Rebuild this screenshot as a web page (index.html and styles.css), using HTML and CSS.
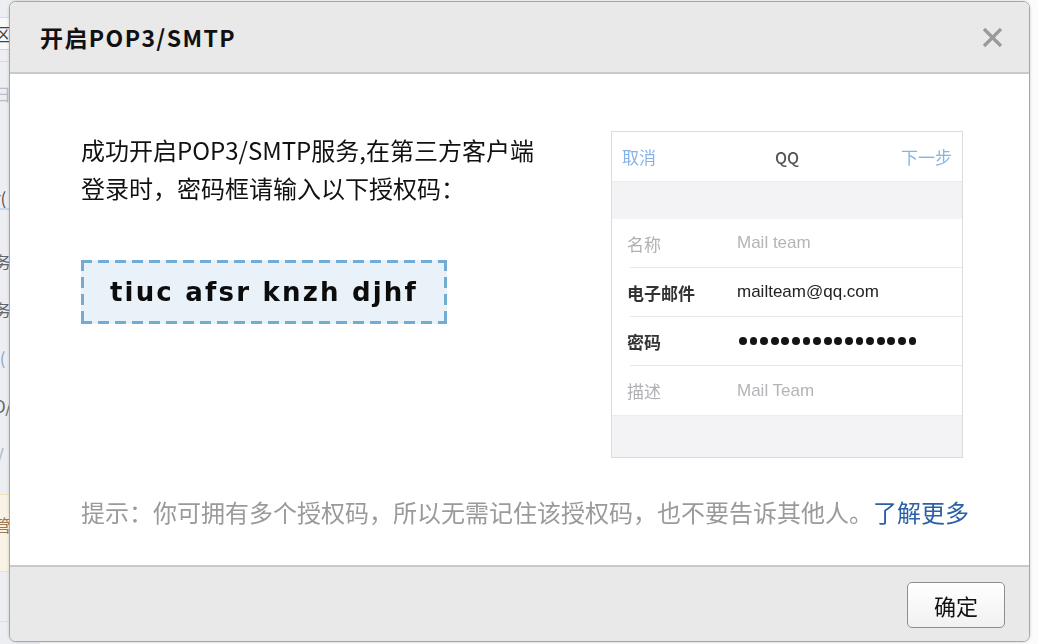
FILE: index.html
```html
<!DOCTYPE html>
<html lang="zh-CN">
<head>
<meta charset="utf-8">
<title>开启POP3/SMTP</title>
<link rel="stylesheet" href="styles.css">
</head>
<body>
<div class="page">
  <div class="bg-col">
    <div class="bg-row top"></div>
    <div class="bg-row input"><span class="frag">区</span></div>
    <div class="bg-row thin"></div>
    <div class="bg-row tall"><span class="frag faint">日</span></div>
    <div class="bg-row tall2"><span class="frag dark">r(</span></div>
    <div class="bg-row sep"></div>
    <div class="bg-row item"><span class="frag">务</span></div>
    <div class="bg-row item"><span class="frag">务</span></div>
    <div class="bg-row item"><span class="frag">(<b class="blue">(</b></span></div>
    <div class="bg-row item"><span class="frag">D/</span></div>
    <div class="bg-row item"><span class="frag faint">V</span></div>
    <div class="bg-row notice"><span class="frag brown">管</span></div>
    <div class="bg-row item2"></div>
  </div>
</div>

<div class="dialog">
  <div class="dlg-head">
    <h1 class="dlg-title">开启POP3/SMTP</h1>
    <button class="dlg-close" aria-label="关闭">
      <svg width="21" height="21" viewBox="0 0 21 21"><path d="M2 2 L19 19 M19 2 L2 19" stroke="#9a9a9a" stroke-width="3.2" fill="none"/></svg>
    </button>
  </div>
  <div class="dlg-body">
    <div class="main">
      <div class="left">
        <p class="desc">成功开启POP3/SMTP服务,在第三方客户端<br>登录时，密码框请输入以下授权码：</p>
        <div class="code">tiuc afsr knzh djhf</div>
      </div>
      <div class="phone">
        <div class="ph-head">
          <span class="ph-cancel">取消</span>
          <span class="ph-title">QQ</span>
          <span class="ph-next">下一步</span>
        </div>
        <div class="ph-gap"></div>
        <div class="ph-list">
          <div class="ph-row light"><span class="ph-label">名称</span><span class="ph-val">Mail team</span></div>
          <div class="ph-row dark"><span class="ph-label">电子邮件</span><span class="ph-val">mailteam@qq.com</span></div>
          <div class="ph-row dark"><span class="ph-label">密码</span><span class="ph-val dots" aria-label="密码已隐藏"><i></i><i></i><i></i><i></i><i></i><i></i><i></i><i></i><i></i><i></i><i></i><i></i><i></i><i></i><i></i><i></i><i></i></span></div>
          <div class="ph-row light last"><span class="ph-label">描述</span><span class="ph-val">Mail Team</span></div>
        </div>
        <div class="ph-foot"></div>
      </div>
    </div>
    <p class="hint">提示：你可拥有多个授权码，所以无需记住该授权码，也不要告诉其他人。<a class="more" href="#">了解更多</a></p>
  </div>
  <div class="dlg-foot">
    <button class="btn-ok">确定</button>
  </div>
</div>
</body>
</html>
```

FILE: styles.css
```css
* { box-sizing: border-box; }
html, body { margin: 0; padding: 0; }
body {
  width: 1038px;
  height: 644px;
  overflow: hidden;
  background: #fbfbfc;
  font-family: "Noto Sans CJK SC", "Noto Sans", sans-serif;
  color: #111;
}

/* background page fragments */
.page { width: 1038px; height: 644px; }
.bg-col {
  width: 40px;
  height: 644px;
  background: #eceef2;
  display: flex;
  flex-direction: column;
  font-size: 17px;
  color: #666;
}
.bg-row { position: relative; overflow: hidden; white-space: nowrap; }
.frag { display: block; margin-left: -6px; line-height: 20px; }
.frag .blue { color: #8aa8d0; font-weight: normal; }
.faint { color: #b8bcc6; }
.dark { color: #555; }
.brown { color: #a07850; }
.bg-row.top { height: 18px; border-bottom: 1px solid #d8dadf; }
.bg-row.input { height: 32px; background: #f8f8f9; padding-top: 6px; border-bottom: 1px solid #d0d2d7; }
.bg-row.input .frag { color: #444; }
.bg-row.thin { height: 12px; border-bottom: 1px solid #d8dadf; }
.bg-row.tall { height: 50px; padding-top: 22px; }
.bg-row.tall2 { height: 98px; padding-top: 76px; border-bottom: 2px solid #c8d6ea; }
.bg-row.sep { height: 42px; }
.bg-row.item { height: 48px; }
.bg-row.notice { height: 78px; margin-top: 2px; background: #f8f3e4; border-top: 1px solid #efe2bb; border-bottom: 1px solid #efe2bb; padding-top: 20px; }
.bg-row.item2 { height: 50px; border-bottom: 1px solid #dcdfe4; }

/* dialog overlay */
.dialog {
  position: fixed;
  left: 9px;
  top: 1px;
  width: 1021px;
  height: 641px;
  background: #fff;
  border: 1px solid #a6a6a6;
  border-radius: 7px;
  box-shadow: 0 0 3px rgba(0,0,0,0.18);
  display: flex;
  flex-direction: column;
  overflow: hidden;
}
.dlg-head {
  height: 72px;
  flex: none;
  background: #e9e9e9;
  border-bottom: 2px solid #c9c9c9;
  display: flex;
  align-items: center;
  justify-content: space-between;
  padding: 0 26px 0 30px;
}
.dlg-title {
  margin: 0;
  font-size: 23px;
  font-weight: 700;
  color: #111;
  letter-spacing: 1.4px;
}
.dlg-close {
  border: 0;
  background: none;
  padding: 0;
  width: 21px;
  height: 21px;
  display: flex;
}

.dlg-body {
  flex: 1;
  padding: 57px 66px 0 71px;
  display: flex;
  flex-direction: column;
}
.main { display: flex; justify-content: space-between; }
.desc {
  margin: 0;
  font-size: 24px;
  line-height: 38px;
  color: #111;
}
.code {
  margin-top: 53px;
  width: 366px;
  height: 64px;
  background:
    repeating-linear-gradient(90deg, #72abd3 0 11px, transparent 11px 17px) left top / 100% 3px no-repeat,
    repeating-linear-gradient(90deg, #72abd3 0 11px, transparent 11px 17px) left bottom / 100% 3px no-repeat,
    repeating-linear-gradient(180deg, #72abd3 0 11px, transparent 11px 17px) left top / 3px 100% no-repeat,
    repeating-linear-gradient(180deg, #72abd3 0 11px, transparent 11px 17px) right top / 3px 100% no-repeat,
    #e9f2f8;
  font-family: "DejaVu Sans", sans-serif;
  font-weight: 700;
  font-size: 26px;
  letter-spacing: 2.2px;
  display: flex;
  align-items: center;
  justify-content: center;
  color: #0c0c0c;
}

.phone {
  width: 352px;
  height: 327px;
  border: 1px solid #dcdcdc;
  background: #f3f3f5;
  display: flex;
  flex-direction: column;
  font-family: "Noto Sans CJK SC", "Noto Sans", sans-serif;
  font-size: 17px;
  filter: blur(0.35px);
}
.ph-head {
  height: 50px;
  background: #fff;
  display: flex;
  align-items: center;
  justify-content: space-between;
  padding: 0 10px 0 10px;
  border-bottom: 1px solid #ececee;
}
.ph-cancel, .ph-next { color: #86b3e6; width: 60px; }
.ph-next { text-align: right; }
.ph-title { color: #555; font-size: 16px; font-weight: 500; }
.ph-gap { height: 37px; }
.ph-list { background: #fff; padding-left: 18px; }
.ph-row {
  height: 49px;
  display: flex;
  align-items: center;
  border-bottom: 1px solid #e8e8ea;
}
.ph-row.last { border-bottom: 0; }
.ph-label { width: 110px; margin-left: -3px; }
.ph-val { font-family: "Liberation Sans", sans-serif; font-size: 17px; }
.ph-row.light { color: #b4b4b8; }
.ph-row.light .ph-label { color: #b0b0b4; }
.ph-row.dark { color: #222; }
.ph-row.dark .ph-label { font-weight: 700; color: #333; }
.dots { display: flex; gap: 2.8px; margin-left: 2px; }
.dots i { display: block; width: 7.8px; height: 7.8px; border-radius: 50%; background: #151515; }
.ph-foot { flex: 1; border-top: 1px solid #ececee; }

.hint {
  margin: 39px 0 0;
  font-size: 24px;
  line-height: 30px;
  color: #9a9a9a;
  white-space: nowrap;
}
.more { color: #2b5fa6; text-decoration: none; }

.dlg-foot {
  height: 76px;
  flex: none;
  background: #e9e9e9;
  border-top: 2px solid #c9c9c9;
  display: flex;
  align-items: center;
  justify-content: flex-end;
  padding: 0 24px 0 0;
}
.btn-ok {
  width: 98px;
  height: 46px;
  border: 1px solid #8e8e8e;
  border-radius: 5px;
  background: linear-gradient(#ffffff, #f1f1f1);
  font-family: "Noto Sans CJK SC", sans-serif;
  font-size: 22px;
  color: #111;
  padding: 0;
  margin-top: 1px;
}
```
